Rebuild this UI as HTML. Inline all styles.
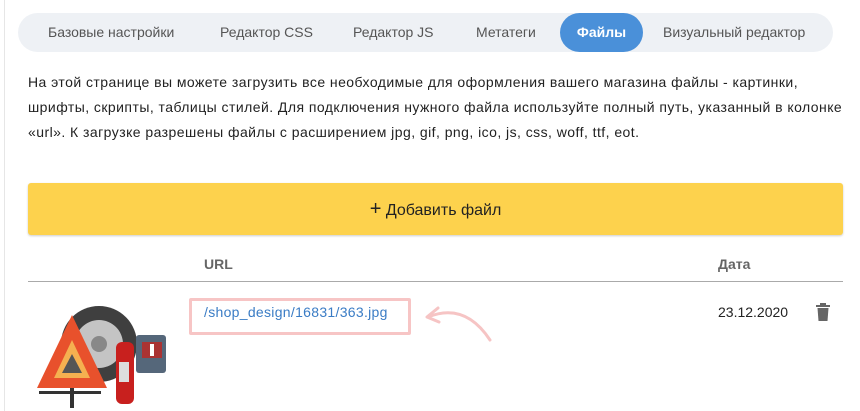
<!DOCTYPE html>
<html><head><meta charset="utf-8"><style>
body{margin:0;width:860px;height:411px;background:#fff;font-family:"Liberation Sans",sans-serif;position:relative;overflow:hidden}
.lb{position:absolute;left:4px;top:0;width:1px;height:411px;background:#e6e6e6}
.tabs{position:absolute;left:18px;top:13px;width:815px;height:39px;background:#eef1f5;border-radius:20px}
.t{position:absolute;top:13px;height:39px;line-height:39px;font-size:14px;color:#555}
.act{background:#4a90d9;color:#fff;font-weight:bold;border-radius:20px;text-align:center}
p{position:absolute;left:28px;top:70px;margin:0;font-size:14px;line-height:25px;color:#222;letter-spacing:0.45px;white-space:nowrap}
.btn{position:absolute;left:28px;top:183px;width:815px;height:52px;background:#fdd24d;border-radius:3px;box-shadow:0 1px 2px rgba(0,0,0,.2);text-align:center;line-height:52px;font-size:16px;color:#222}
.h{position:absolute;top:256px;font-size:14px;font-weight:bold;color:#666}
.line{position:absolute;left:28px;top:281px;width:815px;height:1px;background:#aaa}
.box{position:absolute;left:189px;top:298px;width:216px;height:31px;border:3px solid #f7c5c5;border-radius:2px}
.url{position:absolute;left:204px;top:304px;font-size:14px;color:#3a7cc5;letter-spacing:0.3px}
.date{position:absolute;left:718px;top:304px;font-size:14px;color:#222}
</style></head><body>
<div class="lb"></div>
<div class="tabs"></div>
<div class="t" style="left:48px">Базовые настройки</div>
<div class="t" style="left:220px">Редактор CSS</div>
<div class="t" style="left:353px">Редактор JS</div>
<div class="t" style="left:476px">Метатеги</div>
<div class="t act" style="left:560px;width:83px">Файлы</div>
<div class="t" style="left:663px">Визуальный редактор</div>
<p>На этой странице вы можете загрузить все необходимые для оформления вашего магазина файлы - картинки,<br>шрифты, скрипты, таблицы стилей. Для подключения нужного файла используйте полный путь, указанный в колонке<br>«url». К загрузке разрешены файлы с расширением jpg, gif, png, ico, js, css, woff, ttf, eot.</p>
<div class="btn"><b style="font-size:20px;font-weight:normal">+</b> Добавить файл</div>
<div class="h" style="left:204px">URL</div>
<div class="h" style="left:718px">Дата</div>
<div class="line"></div>
<div class="box"></div>
<div class="url">/shop_design/16831/363.jpg</div>
<div class="date">23.12.2020</div>
<svg style="position:absolute;left:815px;top:303px" width="16" height="18" viewBox="0 0 16 18"><rect x="1" y="2" width="14" height="2" fill="#666"/><rect x="5" y="0" width="6" height="2" fill="#666"/><path d="M2.5 5h11l-1 13h-9z" fill="#666"/></svg>
<svg style="position:absolute;left:420px;top:300px" width="80" height="50"><path d="M8 17 Q45 2 70 40" fill="none" stroke="#f6c4c4" stroke-width="3" stroke-linecap="round"/><path d="M18 8 L7 17 L19 22" fill="none" stroke="#f6c4c4" stroke-width="3" stroke-linecap="round" stroke-linejoin="round"/></svg>
<svg style="position:absolute;left:34px;top:300px" width="140" height="111" viewBox="0 0 140 111">
<circle cx="65" cy="44" r="38" fill="#3f3f3f"/><circle cx="65" cy="44" r="24" fill="#c4c4c4"/><circle cx="65" cy="44" r="8" fill="#888"/>
<rect x="102" y="35" width="30" height="38" rx="3" fill="#55677a"/><rect x="108" y="42" width="20" height="16" fill="#a33"/><rect x="116" y="44" width="4" height="12" fill="#fff"/>
<rect x="82" y="42" width="18" height="62" rx="6" fill="#c8201e"/><rect x="85" y="62" width="10" height="20" fill="#ddd"/>
<path d="M38 15 L3 88 L73 88 Z" fill="#e8512c"/><path d="M38 40 L20 78 L56 78 Z" fill="#f5b050"/><path d="M38 54 L28 73 L48 73 Z" fill="#555"/>
<rect x="5" y="91" width="62" height="3" fill="#333"/><rect x="36" y="88" width="4" height="20" fill="#333"/>
</svg>
</body></html>
